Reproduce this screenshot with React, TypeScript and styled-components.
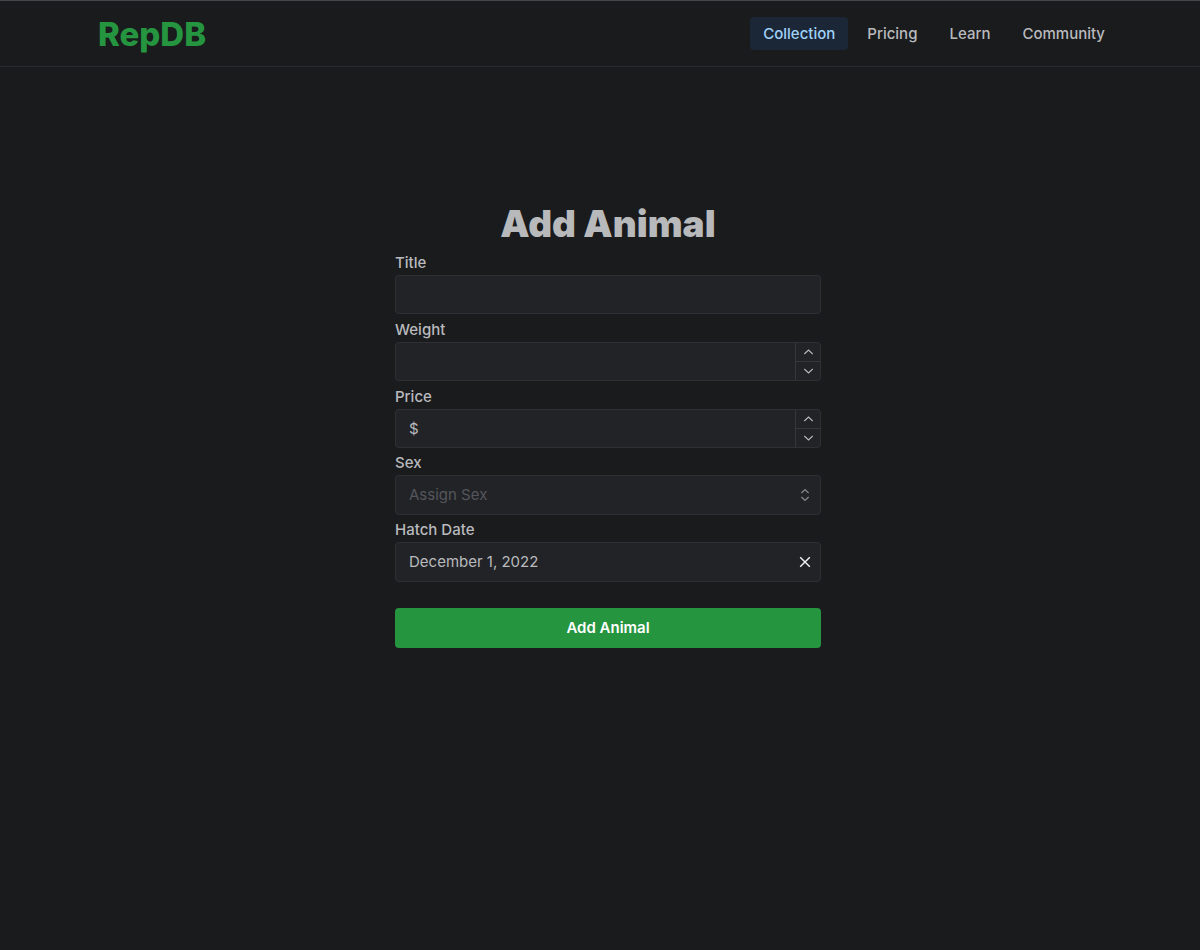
import React, { useState } from "react";
import styled, { createGlobalStyle } from "styled-components";

const GlobalStyle = createGlobalStyle`
  *, *::before, *::after { box-sizing: border-box; }
  html { background: #1a1b1d; }
  body {
    margin: 0;
    background: #1a1b1d;
    color: #b9babd;
    font-family: Inter, "Liberation Sans", sans-serif;
    font-size: 15px;
    line-height: 24px;
  }
`;

const Header = styled.header`
  height: 67px;
  padding: 0 82px 0 98px;
  display: flex;
  align-items: center;
  justify-content: space-between;
  border-top: 1px solid #45474a;
  border-bottom: 1px solid #2a2b2f;
`;

const Logo = styled.a`
  color: #259540;
  font-size: 33px;
  line-height: 44px;
  font-weight: 800;
  text-decoration: none;
`;

const Nav = styled.nav`
  display: flex;
  gap: 6px;
`;

const NavLink = styled.a<{ $active?: boolean }>`
  padding: 4px 13px;
  line-height: 25px;
  font-weight: 500;
  border-radius: 4px;
  text-decoration: none;
  color: ${(p) => (p.$active ? "#a0d2f8" : "#b9babd")};
  background: ${(p) => (p.$active ? "#1b2737" : "transparent")};
`;

const Main = styled.main`
  display: flex;
  justify-content: center;
  padding: 133px 0 40px 16px;
`;

const Form = styled.form`
  width: 100%;
  max-width: 426px;
  display: flex;
  flex-direction: column;
`;

const Title = styled.h1`
  margin: 0;
  text-align: center;
  font-size: 37px;
  line-height: 47px;
  font-weight: 900;
  color: #b8b9bb;
`;

const Control = styled.div`
  display: flex;
  height: 39px;
  border: 1px solid #2f3035;
  border-radius: 4px;
  background: #222327;
  overflow: hidden;
`;

const Field = styled.div<{ $tall?: boolean }>`
  display: flex;
  flex-direction: column;
  padding-top: ${(p) => (p.$tall ? 3 : 4)}px;
  ${Control} { height: ${(p) => (p.$tall ? 40 : 39)}px; }
`;

const Label = styled.label`
  font-weight: 500;
`;

const Prefix = styled.span`
  align-self: center;
  padding-left: 13px;
`;

const Input = styled.input`
  flex: 1;
  min-width: 0;
  padding: 0 13px;
  border: 0;
  outline: 0;
  background: transparent;
  color: inherit;
  font: inherit;
`;

const Select = styled.select`
  flex: 1;
  padding: 0 13px;
  border: 0;
  outline: 0;
  appearance: none;
  background: transparent;
  color: #54565c;
  font: inherit;
`;

const Stepper = styled.div`
  width: 25px;
  display: flex;
  flex-direction: column;
  border-left: 1px solid #36373c;
`;

const StepButton = styled.button`
  flex: 1;
  display: grid;
  place-items: center;
  padding: 0;
  border: 0;
  background: transparent;
  color: #b9babd;
  & + & { border-top: 1px solid #36373c; }
`;

const Trailing = styled.span`
  width: 31px;
  display: grid;
  place-items: center;
  color: #85878c;
`;

const ClearButton = styled.button`
  width: 31px;
  display: grid;
  place-items: center;
  padding: 0;
  border: 0;
  background: transparent;
  color: #f4f4f4;
`;

const Submit = styled.button`
  margin-top: 26px;
  height: 40px;
  border: 0;
  border-radius: 4px;
  background: #259540;
  color: #ffffff;
  font: inherit;
  font-weight: 600;
`;

const Chevron = ({ down }: { down?: boolean }) => (
  <svg width="10" height="6" viewBox="0 0 10 6" fill="none" stroke="currentColor" strokeWidth="1.1">
    <path d={down ? "M1.3 1L5.5 5L9.7 1" : "M1.3 5L5.5 1L9.7 5"} />
  </svg>
);

const Steps = ({ name, onStep }: { name: string; onStep: (by: number) => void }) => (
  <Stepper>
    <StepButton type="button" aria-label={`Increase ${name}`} onClick={() => onStep(1)}>
      <Chevron />
    </StepButton>
    <StepButton type="button" aria-label={`Decrease ${name}`} onClick={() => onStep(-1)}>
      <Chevron down />
    </StepButton>
  </Stepper>
);

const links = ["Collection", "Pricing", "Learn", "Community"];

export default function App() {
  const [weight, setWeight] = useState("");
  const [price, setPrice] = useState("");
  const [date, setDate] = useState("December 1, 2022");
  return (
    <>
      <GlobalStyle />
      <Header>
        <Logo href="#">RepDB</Logo>
        <Nav>
          {links.map((l, i) => (
            <NavLink key={l} href="#" $active={i === 0}>{l}</NavLink>
          ))}
        </Nav>
      </Header>
      <Main>
        <Form onSubmit={(e) => e.preventDefault()}>
          <Title>Add Animal</Title>
          <Field>
            <Label htmlFor="title">Title</Label>
            <Control><Input id="title" /></Control>
          </Field>
          <Field>
            <Label htmlFor="weight">Weight</Label>
            <Control>
              <Input id="weight" inputMode="decimal" value={weight} onChange={(e) => setWeight(e.target.value)} />
              <Steps name="weight" onStep={(by) => setWeight(String(Number(weight) + by))} />
            </Control>
          </Field>
          <Field>
            <Label htmlFor="price">Price</Label>
            <Control>
              <Prefix>$</Prefix>
              <Input id="price" inputMode="decimal" value={price} onChange={(e) => setPrice(e.target.value)} />
              <Steps name="price" onStep={(by) => setPrice(String(Number(price) + by))} />
            </Control>
          </Field>
          <Field $tall>
            <Label htmlFor="sex">Sex</Label>
            <Control>
              <Select id="sex" defaultValue="">
                <option value="">Assign Sex</option>
                <option>Male</option>
                <option>Female</option>
              </Select>
              <Trailing>
                <svg width="10" height="14" viewBox="0 0 10 14" fill="none" stroke="currentColor" strokeWidth="1.3">
                  <path d="M1.4 5L5 1.6L8.6 5M1.4 9L5 12.4L8.6 9" />
                </svg>
              </Trailing>
            </Control>
          </Field>
          <Field $tall>
            <Label htmlFor="hatch">Hatch Date</Label>
            <Control>
              <Input id="hatch" value={date} onChange={(e) => setDate(e.target.value)} />
              <ClearButton type="button" aria-label="Clear date" onClick={() => setDate("")}>
                <svg width="12" height="12" viewBox="0 0 12 12" fill="none" stroke="currentColor" strokeWidth="1.4">
                  <path d="M1.2 1.2L10.8 10.8M10.8 1.2L1.2 10.8" />
                </svg>
              </ClearButton>
            </Control>
          </Field>
          <Submit type="submit">Add Animal</Submit>
        </Form>
      </Main>
    </>
  );
}
